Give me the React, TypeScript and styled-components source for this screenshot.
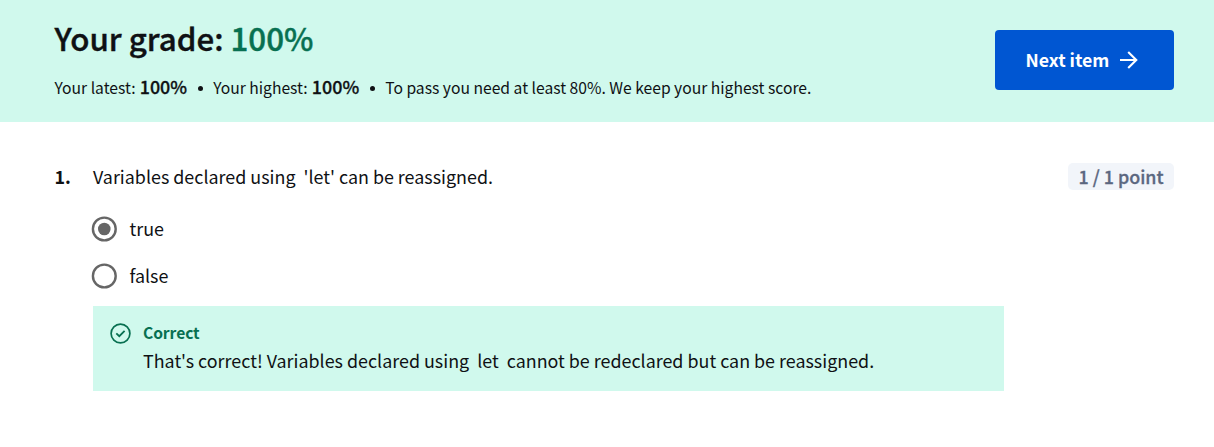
import React from 'react';
import styled, { createGlobalStyle } from 'styled-components';

const GlobalStyle = createGlobalStyle`
  * { box-sizing: border-box; }
  body {
    margin: 0;
    background: #fff;
    color: #0f1114;
    font-family: 'Noto Sans CJK SC', 'Noto Sans', sans-serif;
    font-size: 17.9px;
  }
`;

const Banner = styled.header`
  height: 122px;
  padding: 0 40px 0 54.5px;
  display: flex;
  align-items: flex-start;
  justify-content: space-between;
  background: #d0f9ed;
`;

const Summary = styled.div`
  padding-top: 18px;
`;

const Grade = styled.h1`
  margin: 0 0 14px;
  font-size: 31.3px;
  font-weight: 500;
  line-height: 40px;
  white-space: nowrap;
  -webkit-text-stroke: 0.4px currentColor;
`;

const GradeValue = styled.span`
  color: #087051;
`;

const Details = styled.div`
  display: flex;
  align-items: baseline;
  font-size: 15.67px;
  line-height: 28px;
  white-space: pre;
`;

const Strong = styled.strong`
  margin-left: 0.7px;
  font-size: 17.9px;
  font-weight: 500;
  -webkit-text-stroke: 0.3px currentColor;
`;

const Dot = styled.span`
  align-self: center;
  width: 5px;
  height: 5px;
  margin: 3px 10.5px 0 10.5px;
  border-radius: 50%;
  background: #0f1114;
`;

const NextButton = styled.button`
  width: 179px;
  height: 60px;
  margin-top: 30px;
  padding: 0 0 2px 30.5px;
  display: flex;
  align-items: center;
  gap: 10px;
  border: 0;
  border-radius: 4px;
  background: #0056d2;
  color: #fff;
  font: 700 17.7px/28px 'Noto Sans CJK SC', sans-serif;
`;

const ArrowIcon = styled.svg`
  margin-top: 2px;
  flex: none;
`;

const Question = styled.main`
  padding: 41px 40px 0 54px;
  display: grid;
  grid-template-columns: 39px 911px 1fr;
`;

const Number = styled.div`
  padding-left: 0.5px;
  font-weight: 700;
  line-height: 26px;
`;

const Prompt = styled.div`
  line-height: 26px;
  white-space: pre;
`;

const Points = styled.div`
  justify-self: end;
  width: 106px;
  height: 27px;
  border-radius: 5px;
  background: #f2f5fa;
  color: #5b6780;
  font-weight: 500;
  line-height: 26px;
  text-align: center;
  white-space: nowrap;
  -webkit-text-stroke: 0.3px currentColor;
`;

const Options = styled.div`
  grid-column: 2;
  padding-top: 25px;
`;

const Option = styled.label`
  height: 28px;
  margin: 0 0 19px -2px;
  display: flex;
  align-items: center;
  gap: 12.5px;
  line-height: 26px;
`;

const OptionLabel = styled.span`
  height: 28px;
`;

const Feedback = styled.section`
  grid-column: 2;
  height: 85px;
  margin-top: -3px;
  padding: 12px 17px 0;
  display: flex;
  align-items: flex-start;
  gap: 12px;
  background: #d0f9ed;
`;

const FeedbackIcon = styled.svg`
  margin-top: 5px;
  flex: none;
`;

const FeedbackTitle = styled.div`
  color: #087051;
  font-size: 15.67px;
  font-weight: 700;
  letter-spacing: -0.1px;
  line-height: 30px;
`;

const FeedbackText = styled.div`
  margin-top: -2px;
  line-height: 28px;
  white-space: pre;
`;

function Radio({ checked }: { checked?: boolean }) {
  return (
    <svg width="26" height="26" viewBox="0 0 26 26" fill="none">
      <circle cx="13.3" cy="13" r="11.4" stroke="#666" strokeWidth="2.4" />
      {checked && <circle cx="13.3" cy="13" r="6.3" fill="#666" />}
    </svg>
  );
}

export default function App() {
  return (
    <>
      <GlobalStyle />
      <Banner>
        <Summary>
          <Grade>Your grade: <GradeValue>100%</GradeValue></Grade>
          <Details>
            <span>Your latest: </span><Strong>100%</Strong>
            <Dot />
            <span>Your highest: </span><Strong>100%</Strong>
            <Dot />
            <span>To pass you need at least 80%. We keep your highest score.</span>
          </Details>
        </Summary>
        <NextButton>
          Next item
          <ArrowIcon width="20" height="20" viewBox="0 0 20 20" fill="none" stroke="#fff" strokeWidth="2.1">
            <path d="M1 10h16.3M9.2 1.9l8.1 8.1-8.1 8.1" />
          </ArrowIcon>
        </NextButton>
      </Banner>
      <Question>
        <Number>1.</Number>
        <Prompt>{"Variables declared using  'let' can be reassigned."}</Prompt>
        <Points>1 / 1 point</Points>
        <Options>
          <Option><Radio checked /><OptionLabel>true</OptionLabel></Option>
          <Option><Radio /><OptionLabel>false</OptionLabel></Option>
        </Options>
        <Feedback>
          <FeedbackIcon width="21" height="21" viewBox="0 0 21 21" fill="none" stroke="#087051">
            <circle cx="10.5" cy="10.5" r="9.4" strokeWidth="1.7" />
            <path d="M6.3 10.3l3 2.9 5.3-5.3" strokeWidth="1.8" />
          </FeedbackIcon>
          <div>
            <FeedbackTitle>Correct</FeedbackTitle>
            <FeedbackText>{"That's correct! Variables declared using  let  cannot be redeclared but can be reassigned."}</FeedbackText>
          </div>
        </Feedback>
      </Question>
    </>
  );
}
